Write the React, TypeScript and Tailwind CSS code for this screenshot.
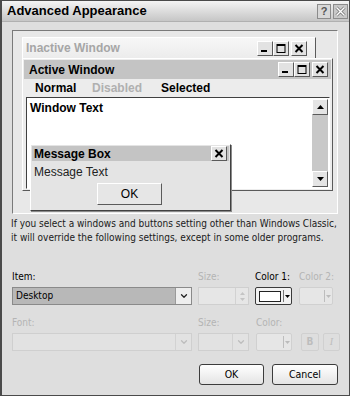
import { ChevronDown } from 'lucide-react'

const raised = 'border border-t-white border-l-white border-r-[#5a5a5a] border-b-[#5a5a5a]'
const sunken = 'border border-t-[#7a7a7a] border-l-[#7a7a7a] border-r-white border-b-white'

function CapBtn({ kind }: { kind: 'min' | 'max' | 'close' }) {
  return (
    <div className={`w-[16px] h-[15px] bg-[#e2e2e2] ${raised} flex items-center justify-center`}>
      <svg width="10" height="9" viewBox="0 0 10 9">
        {kind === 'min' && <rect x="1" y="6" width="6" height="2" fill="#000" />}
        {kind === 'max' && (
          <>
            <rect x="1" y="0.5" width="8" height="8" fill="none" stroke="#000" />
            <rect x="1" y="0" width="8" height="2" fill="#000" />
          </>
        )}
        {kind === 'close' && <path d="M1.5 1 L8.5 8 M8.5 1 L1.5 8" stroke="#000" strokeWidth="2" />}
      </svg>
    </div>
  )
}

function CapBtns() {
  return (
    <div className="flex items-center">
      <CapBtn kind="min" />
      <CapBtn kind="max" />
      <div className="w-[2px]" />
      <CapBtn kind="close" />
    </div>
  )
}

function Preview() {
  return (
    <div className={`relative w-[326px] h-[184px] bg-[#e8e8e8] ${sunken} pt-[6px] pl-[9px] font-['Liberation_Sans',Arial,sans-serif]`}>
      {/* inactive window */}
      <div className={`w-[294px] h-[21px] ${raised} border-b-0 bg-gradient-to-b from-[#f7f7f7] to-[#ececec] flex items-center justify-between pl-[3px] pr-[8px]`}>
        <span className="text-[12px] font-bold text-[#a6a6a6]">Inactive Window</span>
        <CapBtns />
      </div>
      {/* active window */}
      <div className={`w-[311px] h-[133px] bg-[#ececec] ${raised} flex flex-col`}>
        <div className="h-[19px] mx-[1px] mt-[1px] bg-[#c4c4c4] flex items-center justify-between pl-[5px] pr-[3px]">
          <span className="text-[12px] font-bold">Active Window</span>
          <CapBtns />
        </div>
        <div className="h-[18px] flex items-center text-[12px] font-bold pl-[12px]">
          <span className="w-[57px]">Normal</span>
          <span className="w-[69px] text-[#b0b0b0]">Disabled</span>
          <span>Selected</span>
        </div>
        <div className={`flex-1 ml-[3px] mr-[2px] mb-[1px] bg-white ${sunken} border-t-[#404040] border-l-[#404040] flex`}>
          <div className="flex-1 pl-[3px] pt-[3px] text-[12px] font-bold leading-[14px]">Window Text</div>
          <div className="w-[16px] my-[1px] mr-[1px] bg-[#c8c8c8] flex flex-col justify-between">
            <div className={`h-[16px] bg-[#e4e4e4] ${raised} flex items-center justify-center`}>
              <svg width="7" height="4" viewBox="0 0 7 4"><path d="M3.5 0 L7 4 L0 4 Z" fill="#000" /></svg>
            </div>
            <div className={`h-[16px] bg-[#e4e4e4] ${raised} flex items-center justify-center`}>
              <svg width="7" height="4" viewBox="0 0 7 4"><path d="M0 0 L7 0 L3.5 4 Z" fill="#000" /></svg>
            </div>
          </div>
        </div>
      </div>
      {/* message box */}
      <div className={`absolute left-[17px] top-[113px] w-[201px] h-[67px] bg-[#e4e4e4] ${raised} border-r-[#404040] border-b-[#404040] shadow-[1px_1px_0_#8a8a8a] flex flex-col`}>
        <div className="h-[15px] mx-[1px] mt-[1px] bg-[#c4c4c4] flex items-center justify-between pl-[2px] pr-[2px]">
          <span className="text-[12px] font-bold">Message Box</span>
          <CapBtn kind="close" />
        </div>
        <div className="pl-[3px] mt-[4px] text-[12px] leading-[14px] text-[#222]">Message Text</div>
        <div className="flex mt-[4px] ml-[66px]">
          <div className={`w-[65px] h-[22px] bg-[#e6e6e6] ${raised} flex items-center justify-center text-[12px]`}>OK</div>
        </div>
      </div>
    </div>
  )
}

function DropBtn({ disabled }: { disabled?: boolean }) {
  return (
    <div
      className={`w-[16px] h-full border-l ${disabled ? 'border-[#d2d2d2]' : 'border-[#9a9a9a] bg-[#eeeeee]'} flex items-center justify-center`}
    >
      <ChevronDown size={10} strokeWidth={3} color={disabled ? '#bdbdbd' : '#222'} />
    </div>
  )
}

function ColorBtn({ w, enabled }: { w: number; enabled?: boolean }) {
  return (
    <div
      style={{ width: w }}
      className={`h-[18px] rounded-[2px] border ${enabled ? 'border-[#3a3a3a] bg-[#f2f2f2]' : 'border-[#d0d0d0] bg-[#e6e6e6]'} flex items-center`}
    >
      <div className="flex-1 flex items-center justify-center">
        {enabled && <div className="w-[22px] h-[11px] bg-white border border-[#222]" />}
      </div>
      <div className={`w-[8px] h-[12px] border-l ${enabled ? 'border-[#777]' : 'border-[#bdbdbd]'} flex items-center justify-center`}>
        <svg width="5" height="3" viewBox="0 0 5 3"><path d="M0 0 L5 0 L2.5 3 Z" fill={enabled ? '#000' : '#bbb'} /></svg>
      </div>
    </div>
  )
}

export default function App() {
  return (
    <div className="w-[350px] h-[396px] bg-[#dedede] border border-[#4a4a4a] border-l-2 flex flex-col overflow-hidden font-['DejaVu_Sans_Condensed','Liberation_Sans',sans-serif] text-black">
      <div className="h-[21px] bg-gradient-to-b from-[#f4f4f4] to-[#c6c6c6] flex items-center justify-between pl-[5px] pr-[1px] border-b border-[#b0b0b0]">
        <span className="font-['Liberation_Sans',Arial,sans-serif] text-[13px] font-bold">Advanced Appearance</span>
        <div className="flex gap-[2px]">
          <div className="w-[14px] h-[15px] bg-[#d8d8d8] border border-[#8c8c8c] flex items-center justify-center font-['Liberation_Sans',Arial,sans-serif] text-[11px] font-bold text-[#555]">?</div>
          <div className="w-[15px] h-[15px] bg-[#c8c8c8] border border-[#8c8c8c] flex items-center justify-center">
            <svg width="11" height="11" viewBox="0 0 11 11">
              <path d="M1.5 1.5 L9.5 9.5 M9.5 1.5 L1.5 9.5" stroke="#777" strokeWidth="3" />
              <path d="M1.5 1.5 L9.5 9.5 M9.5 1.5 L1.5 9.5" stroke="#fff" strokeWidth="1.4" />
            </svg>
          </div>
        </div>
      </div>

      <div className="pl-[10px] pt-[8px]">
        <Preview />
      </div>

      <p className="ml-[9px] mt-[3px] text-[10px] leading-[14px] text-[#1a1a1a]">
        If you select a windows and buttons setting other than Windows Classic,
        <br />
        it will override the following settings, except in some older programs.
      </p>

      <div className="ml-[10px] mt-[26px] flex gap-[6px] text-[10px] leading-[12px]">
        <div className="w-[180px]">
          <div className="mb-[4px]">Item:</div>
          <div className="h-[18px] border border-[#8a8a8a] bg-[#b8b8b8] flex items-center">
            <span className="flex-1 pl-[3px]">Desktop</span>
            <DropBtn />
          </div>
        </div>
        <div className="w-[51px]">
          <div className="mb-[4px] text-[#b4b4b4]">Size:</div>
          <div className="h-[18px] border border-[#cfcfcf] bg-[#e6e6e6] flex justify-end">
            <div className="w-[13px] border-l border-[#d2d2d2] flex flex-col items-center justify-center gap-[3px]">
              <svg width="5" height="3" viewBox="0 0 5 3"><path d="M2.5 0 L5 3 L0 3 Z" fill="#c4c4c4" /></svg>
              <svg width="5" height="3" viewBox="0 0 5 3"><path d="M0 0 L5 0 L2.5 3 Z" fill="#c4c4c4" /></svg>
            </div>
          </div>
        </div>
        <div className="w-[37px]">
          <div className="mb-[4px] whitespace-nowrap">Color 1:</div>
          <ColorBtn w={37} enabled />
        </div>
        <div className="w-[34px] ml-[1px]">
          <div className="mb-[4px] whitespace-nowrap text-[#b4b4b4]">Color 2:</div>
          <ColorBtn w={34} />
        </div>
      </div>

      <div className="ml-[10px] mt-[12px] flex gap-[6px] text-[10px] leading-[12px] text-[#b4b4b4]">
        <div className="w-[180px]">
          <div className="mb-[4px]">Font:</div>
          <div className="h-[18px] border border-[#cfcfcf] bg-[#e2e2e2] flex justify-end">
            <DropBtn disabled />
          </div>
        </div>
        <div className="w-[51px]">
          <div className="mb-[4px]">Size:</div>
          <div className="h-[18px] border border-[#cfcfcf] bg-[#e2e2e2] flex justify-end">
            <DropBtn disabled />
          </div>
        </div>
        <div className="w-[36px] ml-[1px]">
          <div className="mb-[4px]">Color:</div>
          <ColorBtn w={36} />
        </div>
        <div className="flex gap-[4px] items-end ml-[3px]">
          <div className="w-[18px] h-[18px] border border-[#d0d0d0] rounded-[2px] flex items-center justify-center font-bold text-[#bdbdbd]">B</div>
          <div className="w-[17px] h-[18px] border border-[#d0d0d0] rounded-[2px] flex items-center justify-center italic font-['Liberation_Serif',serif] text-[#bdbdbd]">I</div>
        </div>
      </div>

      <div className="flex justify-end gap-[8px] mt-[13px] mr-[11px] text-[10.5px]">
        <div className="w-[65px] h-[21px] rounded-[3px] border border-[#3c3c3c] bg-gradient-to-b from-white to-[#e4e4e4] flex items-center justify-center">OK</div>
        <div className="w-[66px] h-[21px] rounded-[3px] border border-[#3c3c3c] bg-gradient-to-b from-white to-[#e4e4e4] flex items-center justify-center">Cancel</div>
      </div>
    </div>
  )
}
